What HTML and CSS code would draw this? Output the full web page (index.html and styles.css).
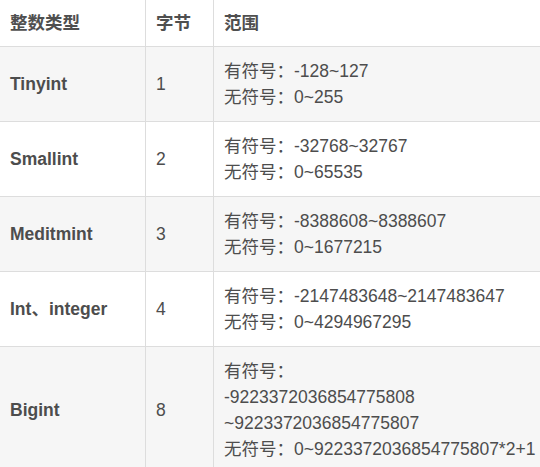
FILE: index.html
```html
<!DOCTYPE html>
<html lang="zh">
<head>
<meta charset="utf-8">
<link rel="stylesheet" href="styles.css">
</head>
<body>
<table class="types">
  <colgroup>
    <col class="c1"><col class="c2"><col class="c3">
  </colgroup>
  <thead>
    <tr><th>整数类型</th><th>字节</th><th>范围</th></tr>
  </thead>
  <tbody>
    <tr class="alt"><td class="name">Tinyint</td><td>1</td><td>有符号：-128~127<br>无符号：0~255</td></tr>
    <tr><td class="name">Smallint</td><td>2</td><td>有符号：-32768~32767<br>无符号：0~65535</td></tr>
    <tr class="alt"><td class="name">Meditmint</td><td>3</td><td>有符号：-8388608~8388607<br>无符号：0~1677215</td></tr>
    <tr><td class="name">Int、integer</td><td>4</td><td>有符号：-2147483648~2147483647<br>无符号：0~4294967295</td></tr>
    <tr class="alt"><td class="name">Bigint</td><td>8</td><td>有符号：<br>-9223372036854775808<br>~9223372036854775807<br>无符号：0~9223372036854775807*2+1</td></tr>
  </tbody>
</table>
</body>
</html>
```
FILE: styles.css
```css
html, body {
  margin: 0;
  padding: 0;
  background: #ffffff;
  overflow: hidden;
}
.types {
  border-collapse: collapse;
  margin-left: -1px;
  width: 542px;
  table-layout: fixed;
  font-family: "Liberation Sans", Arial, "Noto Sans CJK SC", sans-serif;
  font-size: 17.5px;
  line-height: 26px;
  color: #4d4d4d;
}
.c1 { width: 146px; }
.c2 { width: 68px; }
.c3 { width: 328px; }
.types th, .types td {
  border: 1px solid #dddddd;
  padding: 11px 10px;
  text-align: left;
  vertical-align: middle;
  white-space: nowrap;
}
.types th {
  padding-top: 10px;
  padding-bottom: 10px;
  font-weight: bold;
  color: #4f4f4f;
  border-top: none;
}
.types .name {
  font-weight: bold;
}
.alt td {
  background: #f6f6f6;
}
```
